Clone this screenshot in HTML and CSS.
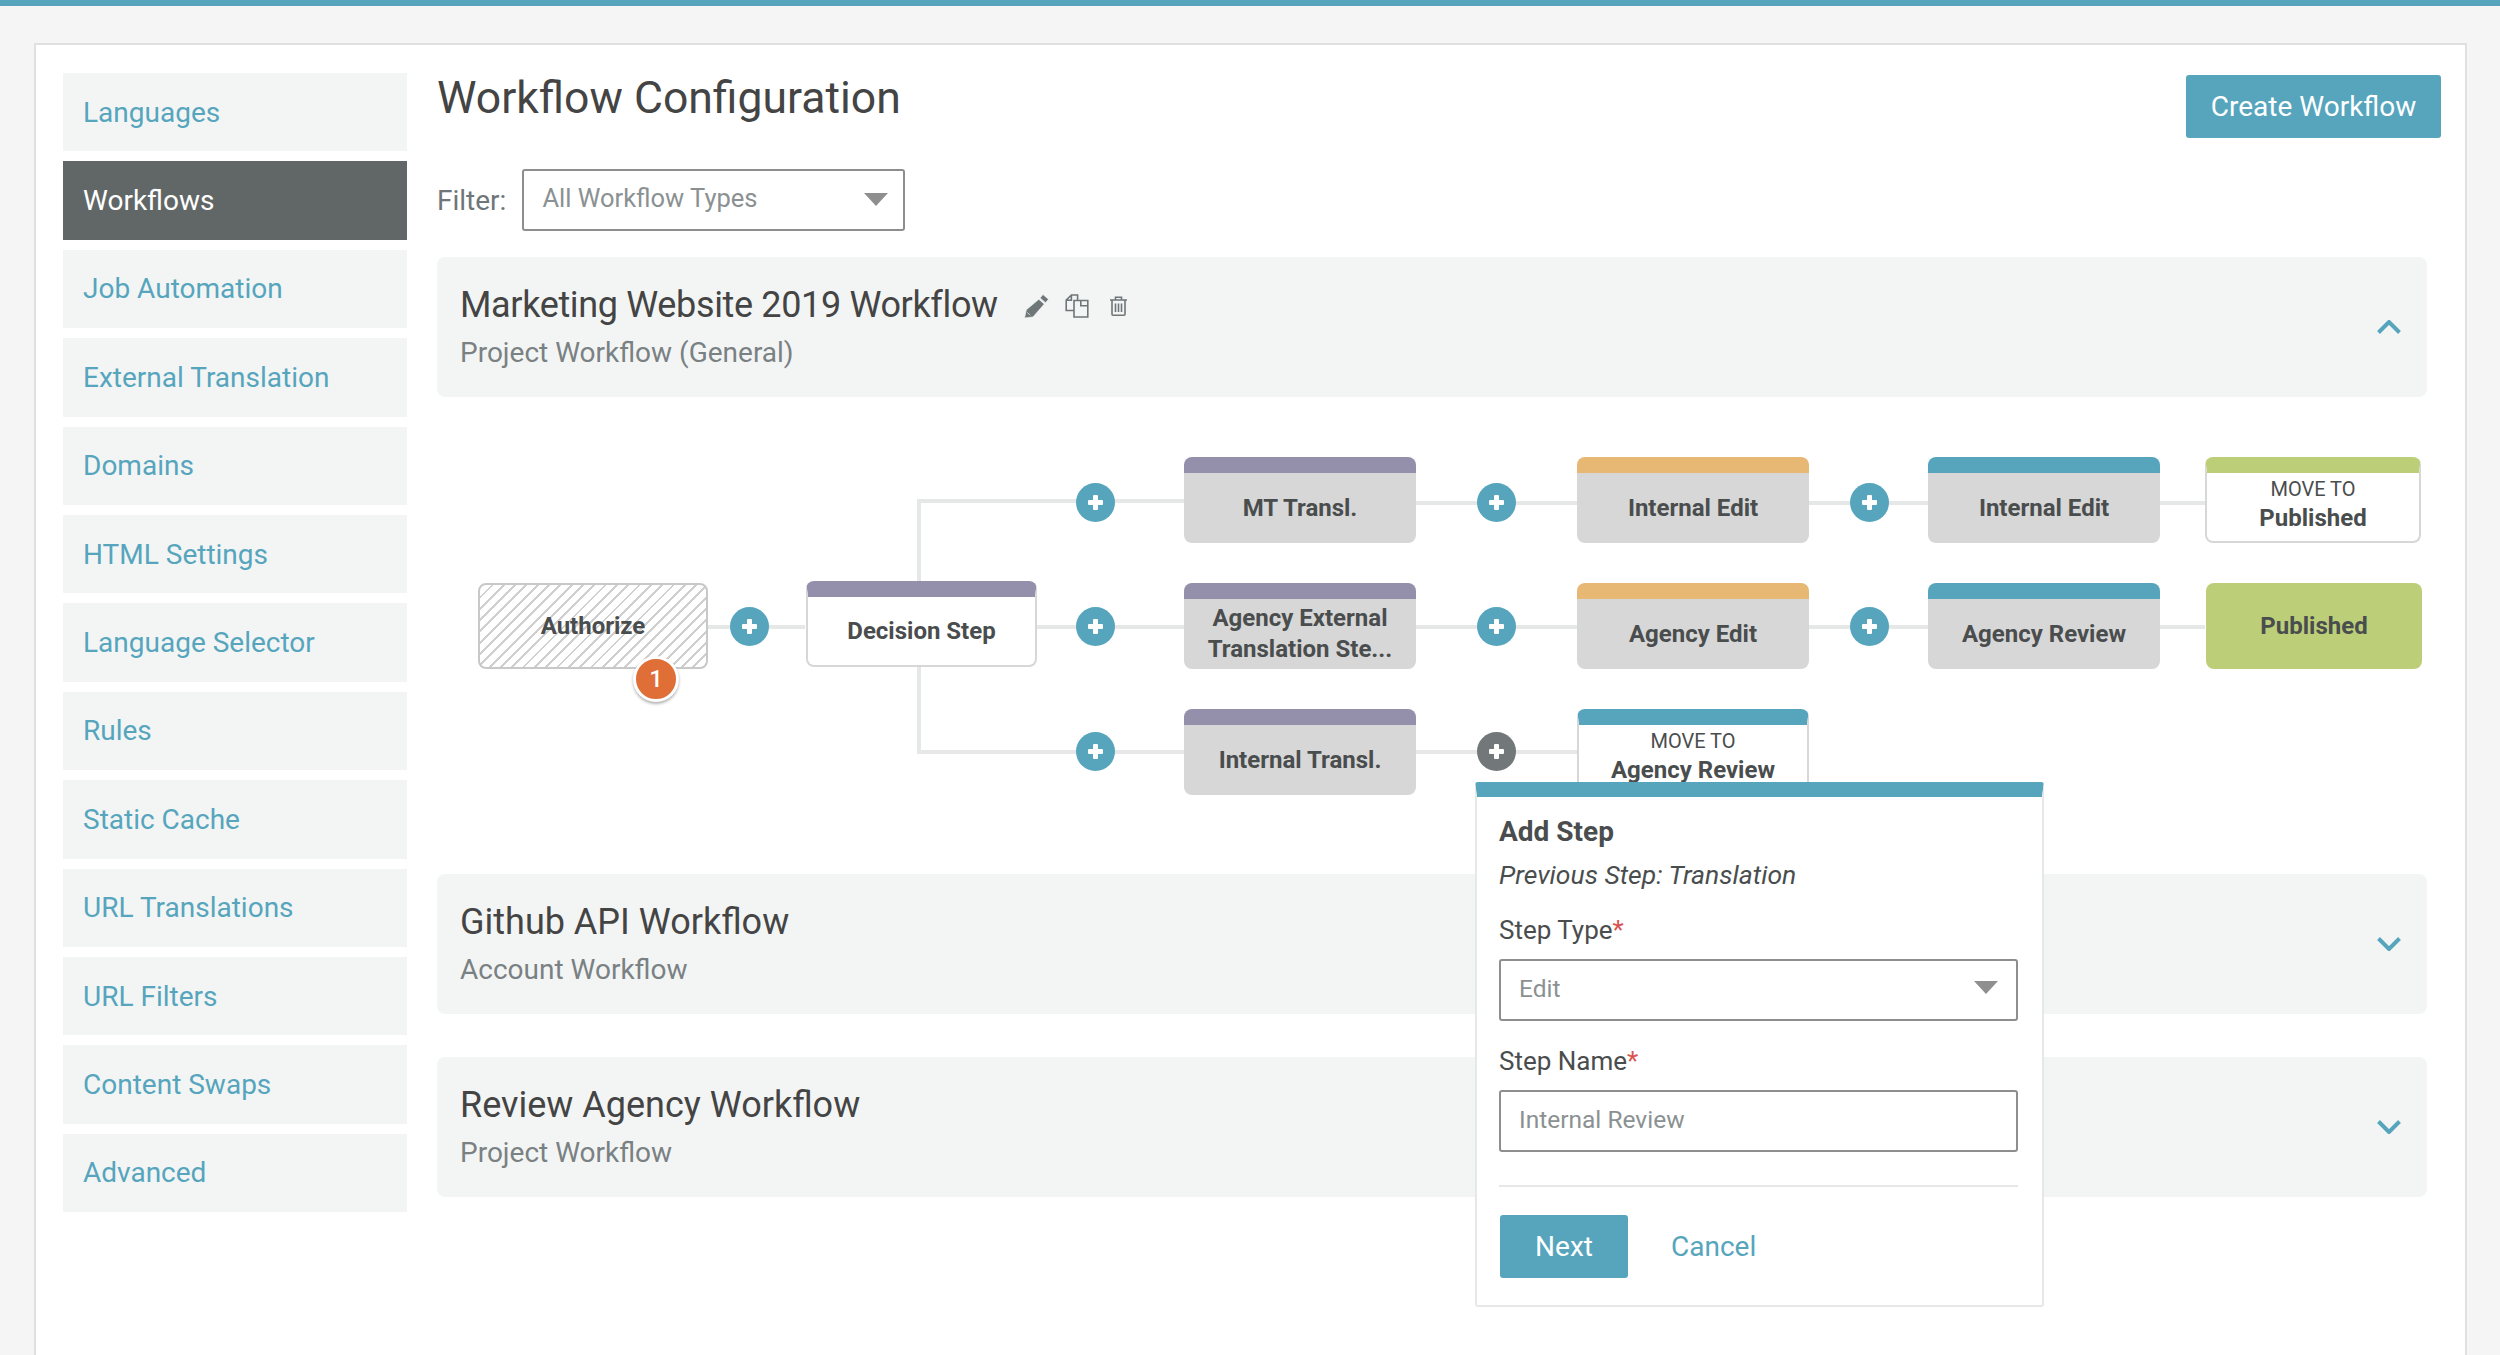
FILE: index.html
```html
<!DOCTYPE html>
<html lang="en">
<head>
    <meta charset="UTF-8">
    <title>Workflow Configuration</title>
    <link rel="stylesheet" href="styles.css">
</head>
<body>
    <div class="top-bar"></div>
    <div class="card">
        <nav class="sidebar">
            <a class="side-item">Languages</a>
            <a class="side-item active">Workflows</a>
            <a class="side-item">Job Automation</a>
            <a class="side-item">External Translation</a>
            <a class="side-item">Domains</a>
            <a class="side-item">HTML Settings</a>
            <a class="side-item">Language Selector</a>
            <a class="side-item">Rules</a>
            <a class="side-item">Static Cache</a>
            <a class="side-item">URL Translations</a>
            <a class="side-item">URL Filters</a>
            <a class="side-item">Content Swaps</a>
            <a class="side-item">Advanced</a>
        </nav>

        <main class="main">
            <div class="head-row">
                <h1>Workflow Configuration</h1>
                <button class="btn btn-create">Create Workflow</button>
            </div>
            <div class="filter-row">
                <label>Filter:</label>
                <div class="select select-filter">All Workflow Types<span class="caret"></span></div>
            </div>

            <section class="panel">
                <div>
                    <div class="panel-title">
                        <h2 class="title-tight">Marketing Website 2019 Workflow</h2>
                        <svg class="icon icon-pencil" viewBox="0 0 25 24"><path d="M19 .5l5.500 4.800-3 3.400-5.500-4.800zM14.800 5.300l5.500 4.800L9 23 .5 24l1.800-8.200zM3.200 18.500l3 2.700"/></svg>
                        <svg class="icon icon-copy" viewBox="0 0 24 24"><path class="outline" d="M9 16.500H1.200V6.200L6.400 1h6.200v5.400M6.400 1v5.200H1.200M9 6.500h13.800V23H9zM15.800 6.500v5.300h7"/></svg>
                        <svg class="icon icon-trash" viewBox="0 0 19 20"><path class="outline" d="M1 4h17M6.500 4V1.200h6V4M3 4v14.200q0 1 1 1h11q1 0 1-1V4M6.500 7.500v8.500M9.500 7.500v8.500M12.500 7.500v8.500"/></svg>
                    </div>
                    <p class="panel-sub">Project Workflow (General)</p>
                </div>
                <svg class="chevron" viewBox="0 0 24 14"><path d="M1.500 12.500L12 2l10.500 10.500"/></svg>
            </section>

            <div class="diagram">
                <!-- connector lines -->
                <span class="line h row1-in"></span>
                <span class="line h row1-a"></span>
                <span class="line h row1-b"></span>
                <span class="line h row1-c"></span>
                <span class="line h row2-start"></span>
                <span class="line h row2-in"></span>
                <span class="line h row2-a"></span>
                <span class="line h row2-b"></span>
                <span class="line h row2-c"></span>
                <span class="line h row3-in"></span>
                <span class="line h row3-a"></span>
                <span class="line v branch"></span>

                <div class="node node-hatch">Authorize<span class="badge">1</span></div>
                <div class="node node-white top-purple node-decision"><b>Decision Step</b></div>

                <div class="node grey top-purple col3 row1"><b>MT Transl.</b></div>
                <div class="node grey top-orange col4 row1"><b>Internal Edit</b></div>
                <div class="node grey top-teal col5 row1"><b>Internal Edit</b></div>
                <div class="node node-white top-green col6 row1 moveto"><small>MOVE TO</small><b>Published</b></div>

                <div class="node grey top-purple col3 row2"><b>Agency External<br>Translation Ste...</b></div>
                <div class="node grey top-orange col4 row2"><b>Agency Edit</b></div>
                <div class="node grey top-teal col5 row2"><b>Agency Review</b></div>
                <div class="node node-published col6 row2">Published</div>

                <div class="node grey top-purple col3 row3"><b>Internal Transl.</b></div>
                <div class="node node-white top-teal col4 row3 moveto moveto-cut"><small>MOVE TO</small><b>Agency Review</b></div>

                <span class="plus p0 prow2"></span>
                <span class="plus p1 prow1"></span>
                <span class="plus p1 prow2"></span>
                <span class="plus p1 prow3"></span>
                <span class="plus p2 prow1"></span>
                <span class="plus p2 prow2"></span>
                <span class="plus p2 prow3 plus-on"></span>
                <span class="plus p3 prow1"></span>
                <span class="plus p3 prow2"></span>

                <form class="popup">
                    <h4>Add Step</h4>
                    <p class="prev">Previous Step: Translation</p>
                    <label class="field-label">Step Type<em>*</em></label>
                    <div class="select select-popup">Edit<span class="caret"></span></div>
                    <label class="field-label">Step Name<em>*</em></label>
                    <div class="select select-popup">Internal Review</div>
                    <hr>
                    <div class="popup-actions">
                        <button type="button" class="btn btn-next">Next</button>
                        <a class="cancel">Cancel</a>
                    </div>
                </form>
            </div>

            <section class="panel">
                <div>
                    <div class="panel-title"><h2>Github API Workflow</h2></div>
                    <p class="panel-sub">Account Workflow</p>
                </div>
                <svg class="chevron" viewBox="0 0 24 14"><path d="M1.500 1.500L12 12 22.500 1.500"/></svg>
            </section>
            <section class="panel panel-last">
                <div>
                    <div class="panel-title"><h2>Review Agency Workflow</h2></div>
                    <p class="panel-sub">Project Workflow</p>
                </div>
                <svg class="chevron" viewBox="0 0 24 14"><path d="M1.500 1.500L12 12 22.500 1.500"/></svg>
            </section>
        </main>
    </div>
</body>
</html>
```

FILE: styles.css
```css
* {
    box-sizing: border-box;
}

html, body {
    height: 1355px;
    overflow: hidden;
}

body {
    margin: 0;
    background-color: #f5f5f5;
    font-family: "Roboto", "Liberation Sans", sans-serif;
    font-size: 28px;
    color: #4a4d4e;
}

.top-bar {
    height: 6px;
    background-color: #56a5bd;
}

.card {
    display: flex;
    gap: 30px;
    width: 2433px;
    height: 1400px;
    margin: 37px 0 0 34px;
    padding: 28px 38px 0 27px;
    background-color: #fff;
    border: 2px solid #e0e0e0;
}

/* sidebar */
.sidebar {
    display: flex;
    flex-direction: column;
    gap: 10px;
    width: 344px;
    flex: none;
}

.side-item {
    display: flex;
    align-items: center;
    height: 78.4px;
    padding-left: 20px;
    background-color: #f3f5f5;
    color: #56a5bd;
}

.side-item.active {
    background-color: #616766;
    color: #fff;
}

/* header */
.main {
    flex: 1;
    min-width: 0;
}

.head-row {
    display: flex;
    justify-content: space-between;
    height: 96px;
}

h1 {
    margin: 0;
    font-size: 44.500px;
    font-weight: 400;
    line-height: 50px;
    color: #444;
}

.btn {
    border: none;
    border-radius: 3px;
    background-color: #56a5bd;
    color: #fff;
    font: inherit;
}

.btn-create {
    width: 255px;
    height: 63px;
    margin: 2px -14px 0 0;
}

.filter-row {
    display: flex;
    align-items: center;
    gap: 16px;
    height: 62px;
    margin-bottom: 26px;
    color: #6f7678;
}

.select {
    position: relative;
    display: flex;
    align-items: center;
    height: 62px;
    padding: 0 0 4px 18px;
    border: 2px solid #8e8e8e;
    border-radius: 3px;
    background-color: #fff;
    font-size: 24.500px;
    color: #8b9192;
}

.select-filter {
    width: 383px;
    font-size: 25.500px;
}

.select-filter .caret {
    right: 15px;
    top: 22px;
}

.caret {
    position: absolute;
    right: 18px;
    top: 20px;
    width: 0;
    height: 0;
    border-left: 12px solid transparent;
    border-right: 12px solid transparent;
    border-top: 13px solid #8f8f8f;
}

/* workflow panels */
.panel {
    display: flex;
    justify-content: space-between;
    align-items: center;
    height: 140px;
    padding: 0 26px 0 23px;
    border-radius: 8px;
    background-color: #f3f5f5;
}

.panel-last {
    margin-top: 43px;
}

.panel-title {
    display: flex;
    align-items: center;
    height: 40px;
}

h2 {
    margin: 0;
    font-size: 36px;
    font-weight: 400;
    color: #444;
}

.title-tight {
    letter-spacing: -0.35px;
}

.panel-sub {
    margin: 11px 0 0;
    color: #7a8183;
}

.icon {
    flex: none;
    margin-top: 1px;
}

.icon-pencil {
    width: 25px;
    height: 24px;
    margin-left: 26px;
    fill: #6f7678;
    stroke: #f3f5f5;
    stroke-width: 0.7;
}

.icon-copy {
    width: 24px;
    height: 24px;
    margin-left: 16px;
}

.icon-trash {
    width: 19px;
    height: 20px;
    margin-left: 20px;
}

.outline {
    fill: none;
    stroke: #6f7678;
    stroke-width: 1.6;
}

.chevron {
    width: 24px;
    height: 14px;
    fill: none;
    stroke: #56a5bd;
    stroke-width: 4;
}

/* diagram canvas */
.diagram {
    position: relative;
    height: 477px;
}

.line {
    position: absolute;
    background-color: #e6e8e8;
}

.line.h {
    height: 4px;
}

.line.v {
    width: 4px;
}

.branch { left: 480px; top: 102px; height: 255px; }
.row1-in { left: 480px; top: 102px; width: 267px; }
.row1-a { left: 979px; top: 104px; width: 161px; }
.row1-b { left: 1371px; top: 104px; width: 120px; }
.row1-c { left: 1722px; top: 104px; width: 46px; }
.row2-start { left: 271px; top: 228px; width: 97px; }
.row2-in { left: 599px; top: 228px; width: 148px; }
.row2-a { left: 979px; top: 228px; width: 161px; }
.row2-b { left: 1371px; top: 228px; width: 120px; }
.row2-c { left: 1722px; top: 228px; width: 46px; }
.row3-in { left: 480px; top: 353px; width: 267px; }
.row3-a { left: 979px; top: 353px; width: 161px; }

.node {
    position: absolute;
    display: flex;
    flex-direction: column;
    align-items: center;
    justify-content: center;
    width: 232px;
    height: 86px;
    border-radius: 8px;
    border-top: 16px solid transparent;
    text-align: center;
    font-size: 24px;
    line-height: 31px;
    color: #4a4d4e;
}

.node b {
    font-weight: 700;
}

.node small {
    font-size: 20px;
    line-height: 26px;
}

.col3 { left: 747px; }
.col4 { left: 1140px; }
.col5 { left: 1491px; }
.col6 { left: 1768px; width: 216px; }
.row1 { top: 60px; }
.row2 { top: 186px; }
.row3 { top: 312px; }

.grey {
    background-color: #d7d7d7;
}

.top-purple { border-top-color: #948fab; }
.top-orange { border-top-color: #e6b873; }
.top-teal { border-top-color: #56a5bd; }
.top-green { border-top-color: #bccf78; }

.node-white {
    background-color: #fff;
    border-left: 2px solid #d7d7d7;
    border-right: 2px solid #d7d7d7;
    border-bottom: 2px solid #d7d7d7;
}

.node-decision {
    left: 369px;
    top: 184px;
    width: 231px;
}

.moveto {
    justify-content: flex-start;
}

.moveto small {
    margin-top: 3px;
}

.moveto b {
    margin-top: 1px;
}

.moveto-cut {
    height: 92px;
    border-bottom: none;
}

.node-hatch {
    left: 41px;
    top: 186px;
    width: 230px;
    border: 2px solid #c8c8c8;
    background: repeating-linear-gradient(-45deg, #cfcfcf 0, #cfcfcf 2px, #fff 2px, #fff 8px);
    font-weight: 700;
}

.node-published {
    left: 1769px;
    border-top: none;
    background-color: #bccf78;
    font-weight: 700;
}

.badge {
    position: absolute;
    left: 153px;
    top: 71px;
    width: 46px;
    height: 46px;
    border: 3px solid #fff;
    border-radius: 50%;
    background-color: #e06e37;
    box-shadow: 0 2px 3px rgba(0, 0, 0, 0.3);
    color: #fff;
    font-size: 24px;
    font-weight: 500;
    line-height: 40px;
}

.plus {
    position: absolute;
    width: 39px;
    height: 39px;
    border-radius: 50%;
    background-color: #56a5bd;
}

.plus::before, .plus::after {
    content: "";
    position: absolute;
    background-color: #fff;
    border-radius: 1px;
}

.plus::before {
    left: 12px;
    top: 17px;
    width: 15px;
    height: 5px;
}

.plus::after {
    left: 17px;
    top: 12px;
    width: 5px;
    height: 15px;
}

.plus-on {
    background-color: #72787a;
}

.p0 { left: 293px; }
.p1 { left: 639px; }
.p2 { left: 1040px; }
.p3 { left: 1413px; }
.prow1 { top: 86px; }
.prow2 { top: 210px; }
.prow3 { top: 335px; }

/* add step popup */
.popup {
    position: absolute;
    left: 1038px;
    top: 385px;
    width: 569px;
    height: 525px;
    padding: 19px 24px 0 22px;
    border: 2px solid #e6e8e8;
    border-top: 15px solid #56a5bd;
    border-radius: 3px;
    background-color: #fff;
}

.popup h4 {
    margin: 0;
    font-size: 28px;
    font-weight: 700;
    line-height: 32px;
}

.prev {
    margin: 11px 0 0;
    font-size: 26.500px;
    font-style: italic;
    line-height: 32px;
}

.field-label {
    display: block;
    height: 34px;
    margin: 22px 0 12px;
    font-size: 26px;
    line-height: 34px;
}

.field-label em {
    color: #d9534f;
    font-style: normal;
}

.select-popup {
    width: 519px;
}

.select-popup + .field-label {
    margin-top: 23px;
}

.popup hr {
    height: 2px;
    margin: 33px 0 28px;
    border: none;
    background-color: #e6e8e8;
}

.popup-actions {
    display: flex;
    align-items: center;
    gap: 43px;
    padding-left: 1px;
}

.btn-next {
    width: 128px;
    height: 63px;
}

.cancel {
    color: #56a5bd;
}
```
